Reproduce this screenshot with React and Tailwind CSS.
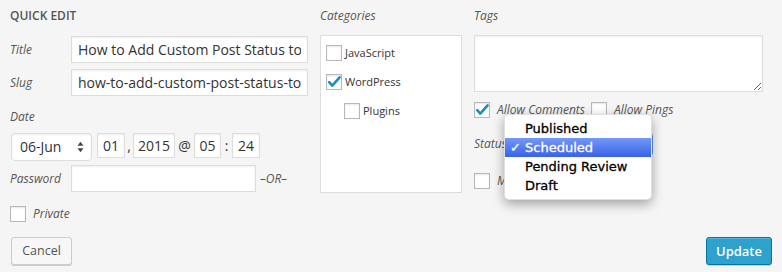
import React from "react";

const Check = () => (
  <svg viewBox="0 0 16 16" className="w-[16px] h-[16px] absolute left-[-1px] top-[-1px]">
    <path d="M3.2 8.2 L6.3 11.6 L13.6 3.4" fill="none" stroke="#1e8cbe" strokeWidth="2.6" strokeLinecap="round" strokeLinejoin="round" />
  </svg>
);

const Box = ({ checked }) => (
  <span className="relative inline-block w-[16px] h-[16px] shrink-0 bg-white border border-[#b4b9be] shadow-[inset_0_1px_2px_rgba(0,0,0,0.1)]">
    {checked && <Check />}
  </span>
);

const field =
  "bg-white border border-[#ddd] shadow-[inset_0_1px_2px_rgba(0,0,0,0.07)] text-[14px] text-[#333] px-[6px] outline-none";
const small =
  "bg-white border border-[#ddd] shadow-[inset_0_1px_2px_rgba(0,0,0,0.07)] text-[14px] text-[#333] px-0 text-center outline-none h-[25px]";

const Label = ({ children, className = "" }) => (
  <span className={`italic text-[12px] leading-[20px] text-[#555] ${className}`}>{children}</span>
);

const App = () => {
  return (
    <div
      className="relative w-[782px] h-[272px] bg-[#f5f5f5] overflow-hidden text-[13px] leading-[20px]"
      style={{ fontFamily: '"Open Sans", "Liberation Sans", sans-serif' }}
    >
      <div className="flex">
        {/* Left column */}
        <div className="ml-[10px] w-[298px]">
          <div className="pt-[6px] h-[26px] text-[12px] font-semibold uppercase text-[#555]">
            Quick Edit
          </div>
          <div className="mt-[10px] flex items-center h-[27px]">
            <Label className="w-[61px]">Title</Label>
            <input readOnly value="How to Add Custom Post Status to WordPress" className={`${field} flex-1 h-[27px] min-w-0`} />
          </div>
          <div className="mt-[6px] flex items-center h-[27px]">
            <Label className="w-[61px]">Slug</Label>
            <input readOnly value="how-to-add-custom-post-status-to-wordpress" className={`${field} flex-1 h-[27px] min-w-0`} />
          </div>
          <div className="mt-[11px] h-[20px] flex items-center">
            <Label>Date</Label>
          </div>
          <div className="mt-[6px] flex items-start h-[28px] text-[14px] text-[#333]">
            <div className="ml-[1px] w-[81px] h-[28px] bg-white border border-[#ddd] rounded-[4px] shadow-[inset_0_1px_2px_rgba(0,0,0,0.07)] flex items-center justify-between pl-[8px] pr-[7px]">
              <span>06-Jun</span>
              <svg viewBox="0 0 8 14" className="w-[7px] h-[12px]">
                <path d="M4 1 L7.5 5.5 H0.5 Z M4 13 L7.5 8.5 H0.5 Z" fill="#444" />
              </svg>
            </div>
            <input readOnly value="01" className={`${small} ml-[5px] w-[28px]`} />
            <span className="w-[8px] text-center leading-[25px]">,</span>
            <input readOnly value="2015" className={`${small} w-[42px]`} />
            <span className="w-[19px] text-center leading-[25px]">@</span>
            <input readOnly value="05" className={`${small} w-[27px]`} />
            <span className="w-[11px] text-center leading-[25px]">:</span>
            <input readOnly value="24" className={`${small} w-[28px]`} />
          </div>
          <div className="mt-[4px] flex items-center h-[27px]">
            <Label className="w-[61px]">Password</Label>
            <input readOnly value="" className={`${field} w-[185px] h-[27px]`} />
            <Label className="ml-[4px]">–OR–</Label>
          </div>
          <div className="mt-[14px] flex items-center gap-[7px] h-[16px]">
            <Box />
            <Label>Private</Label>
          </div>
        </div>

        {/* Categories */}
        <div className="ml-[12px] w-[142px]">
          <div className="pt-[6px] h-[26px] flex items-end">
            <Label>Categories</Label>
          </div>
          <div className="mt-[9px] h-[158px] bg-white border border-[#ddd] pt-[9px] pl-[5px] text-[11px] text-[#333]">
            <div className="flex items-center gap-[3px] h-[16px]">
              <Box />
              <span>JavaScript</span>
            </div>
            <div className="mt-[13px] flex items-center gap-[3px] h-[16px]">
              <Box checked />
              <span>WordPress</span>
            </div>
            <div className="mt-[13px] ml-[18px] flex items-center gap-[3px] h-[16px]">
              <Box />
              <span>Plugins</span>
            </div>
          </div>
        </div>

        {/* Tags */}
        <div className="ml-[12px] w-[289px]">
          <div className="pt-[6px] h-[26px] flex items-end">
            <Label>Tags</Label>
          </div>
          <textarea
            readOnly
            className="mt-[9px] block w-[289px] h-[57px] bg-white border border-[#ddd] shadow-[inset_0_1px_2px_rgba(0,0,0,0.07)] outline-none"
          />
          <div className="mt-[10px] flex items-center h-[16px]">
            <Box checked />
            <Label className="ml-[7px]">Allow Comments</Label>
            <span className="ml-[6px] flex items-center">
              <Box />
            </span>
            <Label className="ml-[7px]">Allow Pings</Label>
          </div>
          <div className="mt-[16px] flex items-center h-[20px]">
            <Label className="w-[46px]">Status</Label>
            <div className="w-[133px] h-[23px] bg-white border border-[#5b9dd9] rounded-[3px]" />
          </div>
          <div className="mt-[19px] flex items-center h-[16px]">
            <Box />
            <Label className="ml-[7px]">Make this post sticky</Label>
          </div>
        </div>
      </div>

      {/* Buttons */}
      <div className="mt-[15px] flex justify-between pl-[11px] pr-[10px]">
        <button className="w-[61px] h-[28px] bg-[#f7f7f7] border border-[#ccc] rounded-[3px] shadow-[0_1px_0_#ccc] text-[12.5px] text-[#555]">
          Cancel
        </button>
        <button className="w-[66px] h-[28px] bg-[#2ea2cc] border border-[#0074a2] rounded-[3px] shadow-[inset_0_1px_0_rgba(120,200,230,0.5),0_1px_0_rgba(0,0,0,0.15)] text-[13px] font-semibold text-white">
          Update
        </button>
      </div>

      {/* Status dropdown menu */}
      <div
        className="absolute left-[504px] top-[114px] w-[148px] py-[4px] bg-white rounded-[5px] shadow-[0_4px_12px_rgba(0,0,0,0.35)] border border-[rgba(0,0,0,0.12)] text-[13px] text-black [-webkit-text-stroke:0.3px_currentColor]"
        style={{ fontFamily: '"DejaVu Sans", "Liberation Sans", sans-serif' }}
      >
        <div className="h-[19px] leading-[19px] pl-[20px]">Published</div>
        <div className="relative h-[19px] leading-[19px] pl-[20px] bg-linear-to-b from-[#7398f6] to-[#3a60ea] text-white">
          <span className="absolute left-[5px] top-0 font-bold">✓</span>
          Scheduled
        </div>
        <div className="h-[19px] leading-[19px] pl-[20px]">Pending Review</div>
        <div className="h-[19px] leading-[19px] pl-[20px]">Draft</div>
      </div>
    </div>
  );
};

export default App;
